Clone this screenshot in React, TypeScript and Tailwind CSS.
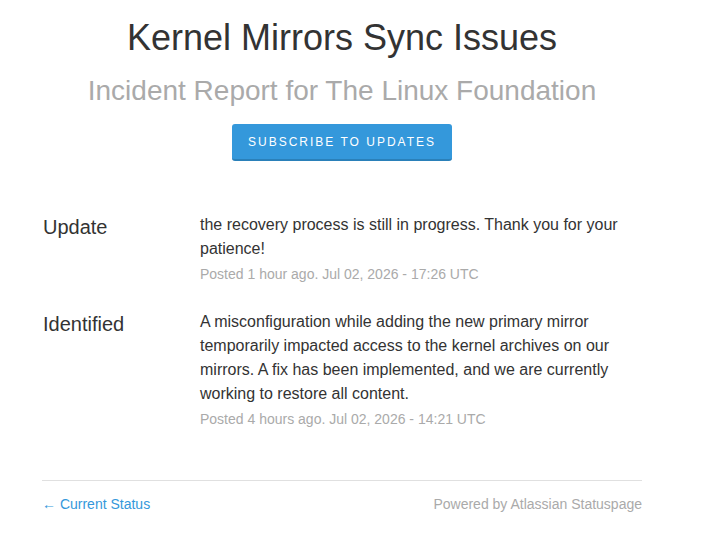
const updates = [
  {
    status: 'Update',
    body: 'the recovery process is still in progress. Thank you for your patience!',
    posted: 'Posted 1 hour ago. Jul 02, 2026 - 17:26 UTC',
  },
  {
    status: 'Identified',
    body: 'A misconfiguration while adding the new primary mirror temporarily impacted access to the kernel archives on our mirrors. A fix has been implemented, and we are currently working to restore all content.',
    posted: 'Posted 4 hours ago. Jul 02, 2026 - 14:21 UTC',
  },
]

export default function App() {
  return (
    <div className="min-h-[540px] bg-white font-['Liberation_Sans',Arial,sans-serif] text-[#333]">
      <div className="w-[684px]">
        <div className="mx-auto w-[600px]">
          <div className="flex flex-col items-center pt-[16px]">
            <h1 className="text-[36px] leading-[44px] text-[#333]">Kernel Mirrors Sync Issues</h1>
            <h2 className="mt-[13px] text-[28px] leading-[36px] text-[#aaa]">
              Incident Report for The Linux Foundation
            </h2>
            <button className="mt-[15px] h-[37px] w-[220px] rounded-[3px] border-b-2 border-[#2a80b9] bg-[#3498db] text-[12px] tracking-[2px] text-white">
              SUBSCRIBE TO UPDATES
            </button>
          </div>

          <div className="mt-[52px] flex flex-col gap-[26px]">
            {updates.map((u) => (
              <div key={u.status} className="flex">
                <div className="w-[158px] pl-[1px] text-[20px] leading-[28px]">{u.status}</div>
                <div className="flex-1 pr-[16px]">
                  <div className="text-[16px] leading-[24px]">{u.body}</div>
                  <div className="mt-[3px] text-[14px] leading-[20px] text-[#aaa]">{u.posted}</div>
                </div>
              </div>
            ))}
          </div>

          <div className="mt-[51px] border-t border-[#e0e0e0] pt-[13px] flex justify-between text-[14px] leading-[20px]">
            <a className="text-[#3498db]" href="#">
              ← Current Status
            </a>
            <span className="text-[#aaa]">Powered by Atlassian Statuspage</span>
          </div>
        </div>
      </div>
    </div>
  )
}
